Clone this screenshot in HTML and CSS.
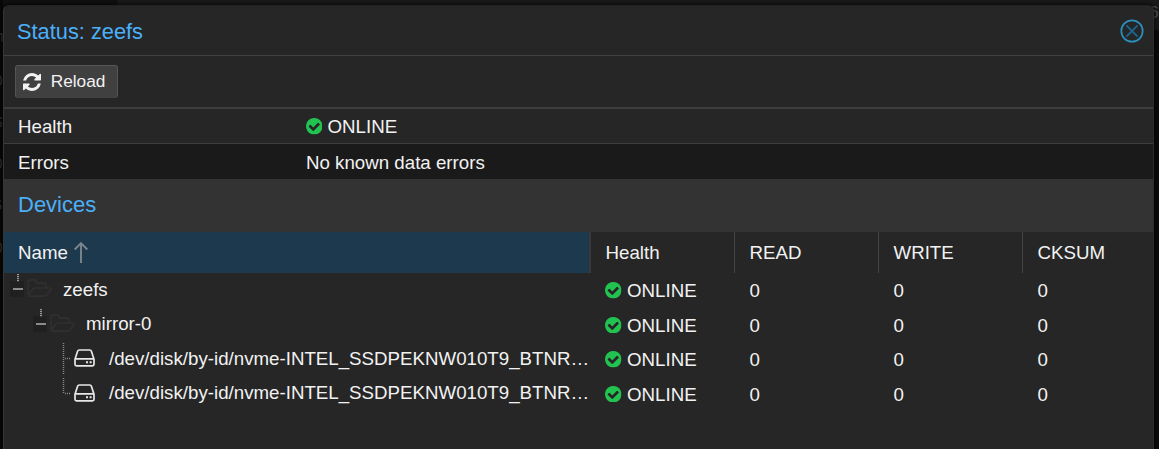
FILE: index.html
```html
<!DOCTYPE html>
<html lang="en">
<head>
<meta charset="utf-8">
<title>Status: zeefs</title>
<link rel="stylesheet" href="styles.css">
</head>
<body>
<svg class="symbols" aria-hidden="true">
  <symbol id="check" viewBox="0 128 1536 1536"><path fill-rule="evenodd" d="M1284 734q0-28-18-46l-91-90q-19-19-45-19t-45 19l-408 407-226-226q-19-19-45-19t-45 19l-91 90q-18 18-18 46 0 27 18 45l362 362q19 19 45 19 27 0 46-19l543-543q18-18 18-45zM1536 896q0 209-103 385.500t-279.500 279.500-385.500 103-385.500-103-279.500-279.500-103-385.500 103-385.500 279.500-279.500 385.500-103 385.500 103 279.500 279.500 103 385.500z"/></symbol>
  <symbol id="refresh" viewBox="0 128 1536 1536"><path d="M1511 1056q0 5-1 7-64 268-268 434.500t-478 166.500q-146 0-282.500-55t-243.500-157l-129 129q-19 19-45 19t-45-19-19-45v-448q0-26 19-45t45-19h448q26 0 45 19t19 45-19 45l-137 137q71 66 161 102t187 36q134 0 250-65t186-179q11-17 53-117 8-23 30-23h192q13 0 22.500 9.500t9.500 22.500zm25-800v448q0 26-19 45t-45 19h-448q-26 0-45-19t-19-45 19-45l138-138q-148-137-349-137-134 0-250 65t-186 179q-11 17-53 117-8 23-30 23h-199q-13 0-22.500-9.500t-9.500-22.500v-7q65-268 270-434.500t480-166.500q146 0 284 55.500t245 156.500l130-129q19-19 45-19t45 19 19 45z"/></symbol>
  <symbol id="folder" viewBox="0 256 1909 1408"><path fill-rule="evenodd" d="M1781 1059q0-35-53-35h-1088q-40 0-85.500 21.500t-71.500 52.500l-294 363q-18 24-18 40 0 35 53 35h1088q40 0 86-22t71-53l294-363q18-22 18-39zm-1141-163h768v-160q0-40-28-68t-68-28h-576q-40 0-68-28t-28-68v-64q0-40-28-68t-68-28h-320q-40 0-68 28t-28 68v853l256-315q44-53 116-87.500t140-34.500zm1269 163q0 62-46 120l-295 363q-43 53-116 87.500t-140 34.500h-1088q-92 0-158-66t-66-158v-960q0-92 66-158t158-66h320q92 0 158 66t66 158v32h544q92 0 158 66t66 158v160h192q54 0 99 24.500t67 70.500q15 32 15 68z"/></symbol>
  <symbol id="drive" viewBox="0 0 21 18"><path d="M1 10.200 3.600 2.300Q4 1 5.300 1H15.700Q17 1 17.400 2.300L20 10.200V15.300Q20 16.800 18.500 16.800H2.500Q1 16.800 1 15.300ZM1.300 9.900H19.700" fill="none" stroke="currentColor" stroke-width="1.700" stroke-linejoin="round"/><path d="M12 12.300h2v2h-2zM15.600 12.300h2v2h-2z"/></symbol>
</svg>

<div class="backdrop">
  <svg class="backdrop-left" viewBox="0 0 3 449"><path d="M0 34h2v8M0 76q3 4 0 9M0 118h2M0 122q3 2 0 5M0 159q3 4 0 9M0 201h1M0 205q2 2 0 4M0 243q3 4 0 9"/></svg>
  <div class="backdrop-right">6</div>
</div>

<main class="window">
  <header class="titlebar">
    <h1>Status: zeefs</h1>
    <svg class="close" viewBox="0 0 24 24"><circle cx="12" cy="12" r="10.700"/><path d="M6.400 6.400 17.600 17.600M17.600 6.400 6.400 17.600"/></svg>
  </header>
  <div class="toolbar">
    <button class="reload"><svg><use href="#refresh"/></svg><span>Reload</span></button>
  </div>
  <dl class="summary">
    <div class="entry"><dt>Health</dt><dd><svg class="check"><use href="#check"/></svg>ONLINE</dd></div>
    <div class="entry entry-alt"><dt>Errors</dt><dd>No known data errors</dd></div>
  </dl>
  <h2 class="section-title">Devices</h2>
  <div class="columns head">
    <div class="sorted">Name<svg class="arrow" viewBox="0 0 14 21"><path d="M7 21V1.500M.7 7.500 7 1.200l6.300 6.300"/></svg></div>
    <div>Health</div><div>READ</div><div>WRITE</div><div>CKSUM</div>
  </div>
  <div class="columns row">
    <div class="node"><span class="toggle"></span><svg class="folder"><use href="#folder"/></svg><span class="label">zeefs</span></div>
    <div><svg class="check"><use href="#check"/></svg>ONLINE</div><div>0</div><div>0</div><div>0</div>
  </div>
  <div class="columns row">
    <div class="node level-1"><span class="toggle"></span><svg class="folder"><use href="#folder"/></svg><span class="label">mirror-0</span></div>
    <div><svg class="check"><use href="#check"/></svg>ONLINE</div><div>0</div><div>0</div><div>0</div>
  </div>
  <div class="columns row">
    <div class="node level-2"><svg class="branch" viewBox="0 0 9 32"><path d="M2.500 0V31M4 15.500H9"/></svg><svg class="drive"><use href="#drive"/></svg><span class="label">/dev/disk/by-id/nvme-INTEL_SSDPEKNW010T9_BTNR…</span></div>
    <div><svg class="check"><use href="#check"/></svg>ONLINE</div><div>0</div><div>0</div><div>0</div>
  </div>
  <div class="columns row">
    <div class="node level-2"><svg class="branch" viewBox="0 0 9 32"><path d="M2.500 0V16M4 15.500H9"/></svg><svg class="drive"><use href="#drive"/></svg><span class="label">/dev/disk/by-id/nvme-INTEL_SSDPEKNW010T9_BTNR…</span></div>
    <div><svg class="check"><use href="#check"/></svg>ONLINE</div><div>0</div><div>0</div><div>0</div>
  </div>
</main>
</body>
</html>
```
FILE: styles.css
```css
* { box-sizing: border-box; }
body {
  margin: 0;
  height: 449px;
  overflow: hidden;
  position: relative;
  background: #0b0b0b;
  color: #f2f2f2;
  font: 18.720px/22px "Liberation Sans", Arial, sans-serif;
}
h1, h2, dl, dd { margin: 0; font-weight: 400; }
svg { display: block; flex: none; fill: currentColor; }
.symbols { position: absolute; width: 0; height: 0; }

.backdrop {
  position: absolute;
  inset: 0;
  display: flex;
  justify-content: space-between;
  background: linear-gradient(90deg, #111 117px, #1b1b1b 117px) 0 0 / 100% 30px no-repeat #0b0b0b;
}
.backdrop-left { width: 3px; height: 449px; background: #090909; fill: none; stroke: #333; stroke-width: 1.500; }
.backdrop-right { width: 8px; color: #555; font-size: 17.280px; padding-top: 1px; text-indent: -2px; }

.window {
  position: absolute;
  left: 3px;
  top: 5px;
  width: 1151px;
  height: 444px;
  border: 1px solid #363636;
  border-bottom: 0;
  border-right-color: #2c2c2c;
  border-top-color: #222;
  border-radius: 6px 6px 0 0;
  background: #262626;
  box-shadow: 0 0 6px #000;
  overflow: hidden;
}
.titlebar {
  display: flex;
  align-items: center;
  justify-content: space-between;
  height: 50px;
  padding: 0 10px 0 13px;
  border-bottom: 1px solid #414141;
}
.titlebar h1 { font-size: 21.800px; line-height: 26px; color: #4bb0fa; padding-top: 2px; }
.close { width: 24px; height: 24px; margin-top: 1.500px; margin-right: -.5px; fill: none; stroke: #2a91bd; stroke-width: 1.700; }
.close path { stroke: #1a668e; stroke-width: 1.900; }

.toolbar { height: 53px; padding: 9px 11px 0; border-bottom: 2px solid #3e3e3e; }
.reload {
  display: flex;
  align-items: center;
  gap: 10px;
  width: 103px;
  height: 33px;
  padding: 0 0 0 7px;
  border: 1px solid #555;
  border-bottom-color: #424242;
  border-radius: 3px;
  background: #404040;
  color: #f2f2f2;
  font: 17.280px/20px "Liberation Sans", Arial, sans-serif;
}
.reload svg { width: 18px; height: 18px; margin-top: 1px; }
.reload span { padding-bottom: 2px; margin-left: -.3px; }

.entry { display: flex; height: 35px; padding: 7px 14px 0; border-bottom: 1px solid #3e3e3e; }
.entry dt { width: 288px; }
.entry dd { display: flex; }
.entry-alt { padding-top: 8px; border-bottom: 0; background: #1a1a1a; }
.check { width: 16.500px; height: 16.500px; margin: 2.300px 5.300px 0 .2px; color: #22c250; }
.entry .check { margin-left: -.2px; margin-right: 5.200px; }

.section-title {
  height: 53px;
  padding: 12px 14px;
  background: #333;
  color: #4bb0fa;
  font-size: 22px;
  line-height: 27px;
}

.columns { display: grid; grid-template-columns: 586px 144px 144px 144px 1fr; }
.head { height: 41px; }
.head > div { display: flex; padding: 10px 14.500px 0; border-left: 1px solid #434343; }
.head .sorted { padding-left: 14px; border-left: 0; background: #1d394d; margin-right: 1px; }
.head > div:nth-child(2) { border-left-width: 2px; border-left-color: #393939; margin-left: -1px; padding-left: 14.500px; }
.arrow { width: 14px; height: 21px; margin: 0 0 0 6.500px; fill: none; stroke: #7d868d; stroke-width: 1.900; }

.row { height: 34.560px; }
.row > div { display: flex; padding: 7px 15.600px 0; }
.row > div:nth-child(2) { padding-left: 15px; }
.row > .node { padding: 0 0 0 6px; }
.row > .level-1 { padding-left: 29px; }
.row > .level-2 { padding-left: 57px; }
.toggle {
  width: 14px;
  height: 24px;
  background:
    linear-gradient(#8b8b8b, #8b8b8b) 3px 15px / 10px 2px no-repeat,
    repeating-linear-gradient(#999 0 1px, #3c3c3c 1px 2px) 7px 1px / 2px 8px no-repeat,
    linear-gradient(#202020, #202020) 0 8px / 14px 16px no-repeat;
}
.folder { width: 25px; height: 18px; margin: 6px 11px 0 3px; color: #303030; }
.label { padding-top: 5.600px; white-space: nowrap; }
.branch { width: 9px; height: 32px; margin-top: 1px; fill: none; stroke: #8a8a8a; stroke-width: 1.500; stroke-dasharray: 1 1; }
.drive { width: 21px; height: 18px; margin: 7px 14px 0 4px; color: #e8e8e8; }
```
